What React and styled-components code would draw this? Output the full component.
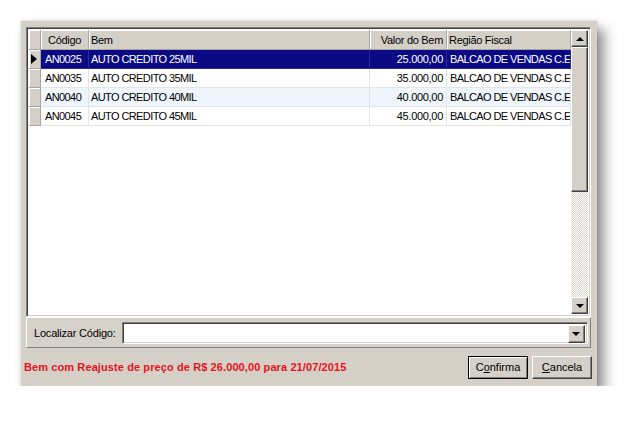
import React from "react";
import styled, { createGlobalStyle, css } from "styled-components";

const Global = createGlobalStyle`
  html, body { margin: 0; padding: 0; background: #fff; }
  body { font-family: "Liberation Sans", Arial, sans-serif; font-size: 11px; color: #000; }
`;

const raised = css`
  border: 1px solid;
  border-color: #fff #404040 #404040 #fff;
  box-shadow: inset -1px -1px #808080;
  box-sizing: border-box;
`;

const sunken = css`
  border: 1px solid;
  border-color: #808080 #fff #fff #808080;
  box-shadow: inset 1px 1px #404040, inset -1px -1px #d4d0c8;
  box-sizing: border-box;
`;

const Page = styled.div`
  padding: 21px 0 0 21px;
`;

const Window = styled.div`
  width: 576px;
  height: 365px;
  box-sizing: border-box;
  background: #d4d0c8;
  padding: 6px 6px 0 5px;
  display: flex;
  flex-direction: column;
  box-shadow: 7px 8px 12px rgba(0, 0, 0, 0.45), 0 0 3px rgba(0, 0, 0, 0.15);
`;

const GridFrame = styled.div`
  ${sunken};
  height: 290px;
  padding: 2px;
  background: #fff;
  display: flex;
`;

const Table = styled.div`
  flex: 1;
  overflow: hidden;
  letter-spacing: -0.3px;
`;

const cols = "12px 48px 281px 77px 124px";

const HeaderRow = styled.div`
  display: grid;
  grid-template-columns: ${cols};
  height: 20px;
`;

const HeadCell = styled.div`
  background: #d4d0c8;
  border-right: 1px solid #a8a5a0;
  border-bottom: 1px solid #a8a5a0;
  box-shadow: inset 1px 1px #fff;
  display: flex;
  align-items: center;
  justify-content: ${(p) => (p.$right ? "flex-end" : "flex-start")};
  padding: 0 ${(p) => (p.$right ? "3px" : "0")} 0 ${(p) => p.$pl || 2}px;
  white-space: nowrap;
  overflow: hidden;
  box-sizing: border-box;
`;

const Row = styled.div`
  display: grid;
  grid-template-columns: ${cols};
  height: 19px;
  background: ${(p) => (p.$alt ? "#eef5fc" : "#fff")};
`;

const Indicator = styled.div`
  background: #d4d0c8;
  border-right: 1px solid #a8a5a0;
  border-bottom: 1px solid #a8a5a0;
  box-shadow: inset 1px 1px #fff;
  box-sizing: border-box;
  display: flex;
  align-items: center;
  padding-left: 2px;
`;

const Arrow = styled.span`
  width: 0;
  height: 0;
  border-top: 5px solid transparent;
  border-bottom: 5px solid transparent;
  border-left: 6px solid #000;
`;

const Cell = styled.div`
  border-right: 1px solid #e4e4e4;
  border-bottom: 1px solid #e4e4e4;
  box-sizing: border-box;
  display: flex;
  align-items: center;
  justify-content: ${(p) => (p.$right ? "flex-end" : "flex-start")};
  padding: 0 ${(p) => (p.$right ? "3px" : "0")} 0 ${(p) => p.$pl || 2}px;
  white-space: nowrap;
  overflow: hidden;
  letter-spacing: ${(p) => (p.$caps ? "-0.6px" : "-0.3px")};
  background: ${(p) => (p.$sel ? "#0a0a84" : "transparent")};
  color: ${(p) => (p.$sel ? "#fff" : "#000")};
  ${(p) => p.$sel && "border-color: #2a2a9a;"}
`;

const ScrollBar = styled.div`
  width: 17px;
  display: flex;
  flex-direction: column;
`;

const ScrollBtn = styled.div`
  ${raised};
  width: 17px;
  height: 17px;
  background: #d4d0c8;
  display: flex;
  align-items: center;
  justify-content: center;
`;

const Tri = styled.span`
  width: 0;
  height: 0;
  border-left: 4px solid transparent;
  border-right: 4px solid transparent;
  ${(p) => (p.$up ? "border-bottom: 4px solid #000;" : "border-top: 4px solid #000;")}
`;

const Thumb = styled.div`
  ${raised};
  height: 145px;
  background: #d4d0c8;
`;

const Track = styled.div`
  flex: 1;
  background: repeating-conic-gradient(#fff 0 25%, #d8d5ce 0 50%) 0 0 / 2px 2px;
`;

const SearchPanel = styled.div`
  height: 31px;
  box-sizing: border-box;
  border: 1px solid;
  border-color: #fff #808080 #808080 #fff;
  background: #d6d2ca;
  display: flex;
  align-items: center;
  padding-left: 7px;
  gap: 6px;
  letter-spacing: -0.2px;
`;

const Combo = styled.div`
  ${sunken};
  width: 466px;
  height: 22px;
  background: #fff;
  display: flex;
  justify-content: flex-end;
  padding: 2px;
`;

const ComboBtn = styled(ScrollBtn)`
  height: 18px;
`;

const Footer = styled.div`
  flex: 1;
  display: flex;
  align-items: center;
  margin: 0 -1px 0 -2px;
`;

const Warning = styled.div`
  flex: 1;
  color: #e8101a;
  font-weight: bold;
  letter-spacing: 0.1px;
`;

const Button = styled.div`
  ${raised};
  width: ${(p) => p.$w}px;
  height: 23px;
  display: flex;
  align-items: center;
  justify-content: center;
  background: #d4d0c8;
  margin-left: ${(p) => p.$ml || 0}px;
  ${(p) =>
    p.$default &&
    css`
      border-color: #000;
      box-shadow: inset 1px 1px #fff, inset -1px -1px #808080;
    `}
`;

const rows = [
  ["AN0025", "AUTO CREDITO 25MIL", "25.000,00"],
  ["AN0035", "AUTO CREDITO 35MIL", "35.000,00"],
  ["AN0040", "AUTO CREDITO 40MIL", "40.000,00"],
  ["AN0045", "AUTO CREDITO 45MIL", "45.000,00"],
];

export default function App() {
  return (
    <Page>
      <Global />
      <Window>
        <GridFrame>
          <Table>
            <HeaderRow>
              <HeadCell />
              <HeadCell $pl={7}>Código</HeadCell>
              <HeadCell>Bem</HeadCell>
              <HeadCell $right>Valor do Bem</HeadCell>
              <HeadCell>Região Fiscal</HeadCell>
            </HeaderRow>
            {rows.map((r, i) => {
              const sel = i === 0;
              return (
                <Row key={r[0]} $alt={i === 2}>
                  <Indicator>{sel && <Arrow />}</Indicator>
                  <Cell $sel={sel} $pl={4} $caps>{r[0]}</Cell>
                  <Cell $sel={sel} $caps>{r[1]}</Cell>
                  <Cell $sel={sel} $right>{r[2]}</Cell>
                  <Cell $sel={sel} $pl={3} $caps>BALCAO DE VENDAS C.E</Cell>
                </Row>
              );
            })}
          </Table>
          <ScrollBar>
            <ScrollBtn><Tri $up /></ScrollBtn>
            <Thumb />
            <Track />
            <ScrollBtn><Tri /></ScrollBtn>
          </ScrollBar>
        </GridFrame>
        <SearchPanel>
          <span>Localizar Código:</span>
          <Combo>
            <ComboBtn><Tri /></ComboBtn>
          </Combo>
        </SearchPanel>
        <Footer>
          <Warning>Bem com Reajuste de preço de R$ 26.000,00 para 21/07/2015</Warning>
          <Button $w={60} $default>
            C<u>o</u>nfirma
          </Button>
          <Button $w={60} $ml={4}>
            <u>C</u>ancela
          </Button>
        </Footer>
      </Window>
    </Page>
  );
}
